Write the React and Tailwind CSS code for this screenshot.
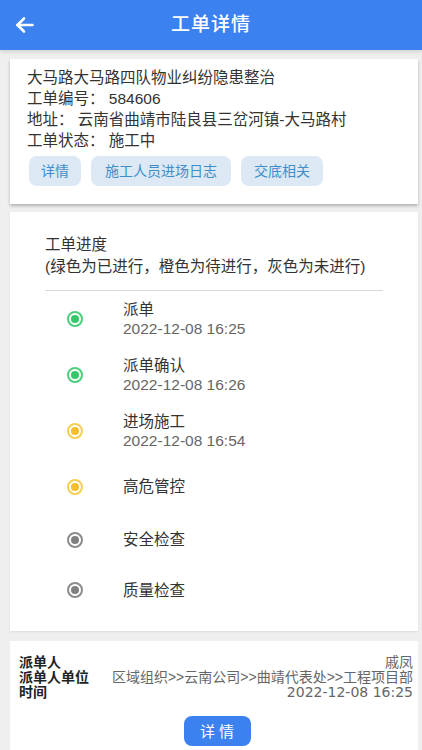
import React from 'react';

// timeline steps: green = done, yellow = pending, gray = not started
const steps = [
  { name: '派单', time: '2022-12-08 16:25', color: 'green', h: 'h-[56px]' },
  { name: '派单确认', time: '2022-12-08 16:26', color: 'green', h: 'h-[56px]' },
  { name: '进场施工', time: '2022-12-08 16:54', color: 'yellow', h: 'h-[56px]' },
  { name: '高危管控', color: 'yellow', h: 'h-[55px]' },
  { name: '安全检查', color: 'gray', h: 'h-[51px]' },
  { name: '质量检查', color: 'gray', h: 'h-[50px]' },
];

const dotStyles = {
  green: { ring: 'border-[#4ccf7c]', fill: 'bg-[#36c76a]' },
  yellow: { ring: 'border-[#f6cf55]', fill: 'bg-[#f4bf2a]' },
  gray: { ring: 'border-[#8c8c8c]', fill: 'bg-[#808080]' },
};

const Dot = ({ color }) => {
  const s = dotStyles[color];
  return (
    <span className={`flex items-center justify-center w-[16px] h-[16px] rounded-full border-2 ${s.ring}`}>
      <span className={`block w-[8px] h-[8px] rounded-full ${s.fill}`} />
    </span>
  );
};

const App = () => {
  const font = { fontFamily: "'Liberation Sans', 'Noto Sans CJK SC', sans-serif" };

  return (
    <div className="w-[422px] h-[750px] overflow-hidden bg-[#efefef]" style={font}>
      {/* Header */}
      <div className="relative h-[50px] bg-[#3b82f0] flex items-center justify-center shadow-[0_2px_4px_rgba(0,0,0,0.12)]">
        <svg
          className="absolute left-[15px] top-[16px]"
          width="19"
          height="18"
          viewBox="0 0 19 18"
          fill="none"
          stroke="white"
          strokeWidth="2.6"
          strokeLinecap="round"
          strokeLinejoin="round"
        >
          <path d="M17.5 9H2.5" />
          <path d="M9 2.5L2.5 9L9 15.5" />
        </svg>
        <span className="text-white text-[19px] font-medium tracking-[1px]">工单详情</span>
      </div>

      {/* Summary card */}
      <div className="ml-[10px] mr-[4px] mt-[9px] bg-white pl-[17px] pt-[8px] pb-[18px] shadow-[0_2px_3px_rgba(0,0,0,0.25)] text-[15.5px] leading-[21px] text-[#333]">
        <div>大马路大马路四队物业纠纷隐患整治</div>
        <div>工单编号：&nbsp;584606</div>
        <div>地址：&nbsp;云南省曲靖市陆良县三岔河镇-大马路村</div>
        <div>工单状态：&nbsp;施工中</div>
        <div className="flex gap-[10px] mt-[5px] ml-[2px]">
          <span className="h-[30px] px-[12px] flex items-center rounded-[8px] bg-[#dce8f4] text-[#3f8ec9] text-[14px]">详情</span>
          <span className="h-[30px] px-[14px] flex items-center rounded-[8px] bg-[#dce8f4] text-[#3f8ec9] text-[14px]">施工人员进场日志</span>
          <span className="h-[30px] px-[13px] flex items-center rounded-[8px] bg-[#dce8f4] text-[#3f8ec9] text-[14px]">交底相关</span>
        </div>
      </div>

      {/* Progress card */}
      <div className="ml-[10px] mr-[4px] mt-[8px] bg-white px-[35px] pt-[22px] pb-[16px] shadow-[0_1px_2px_rgba(0,0,0,0.08)]">
        <div className="text-[15.5px] leading-[22px] text-[#333]">工单进度</div>
        <div className="text-[15.5px] leading-[22px] text-[#333] whitespace-nowrap">(绿色为已进行，橙色为待进行，灰色为未进行)</div>
        <div className="mt-[12px] h-px bg-[#d9d9d9]" />
        {steps.map((s) => (
          <div key={s.name} className={`flex items-center ${s.h}`}>
            <div className="ml-[22px] w-[16px] flex justify-center">
              <Dot color={s.color} />
            </div>
            <div className="ml-[40px] text-[15.5px] leading-[19px]">
              <div className="text-[#333]">{s.name}</div>
              {s.time && <div className="text-[#666]">{s.time}</div>}
            </div>
          </div>
        ))}
      </div>

      {/* Dispatch info card */}
      <div className="ml-[10px] mr-[4px] mt-[10px] bg-white pl-[9px] pr-[5px] pt-[14px] h-[120px] text-[14px] leading-[15px]">
        <div className="flex justify-between">
          <span className="font-bold text-[#222]">派单人</span>
          <span className="text-[#666]">戚凤</span>
        </div>
        <div className="flex justify-between">
          <span className="font-bold text-[#222]">派单人单位</span>
          <span className="text-[#666]">区域组织&gt;&gt;云南公司&gt;&gt;曲靖代表处&gt;&gt;工程项目部</span>
        </div>
        <div className="flex justify-between">
          <span className="font-bold text-[#222]">时间</span>
          <span className="text-[#666]" style={{ fontFamily: "'DejaVu Sans', sans-serif" }}>2022-12-08 16:25</span>
        </div>
        <div className="flex justify-center mt-[16px] pl-[2px]">
          <span className="w-[67px] h-[30px] flex items-center justify-center rounded-[8px] bg-[#3b82f0] text-white text-[15px] tracking-[4px] pl-[4px]">详情</span>
        </div>
      </div>
    </div>
  );
};

export default App;
